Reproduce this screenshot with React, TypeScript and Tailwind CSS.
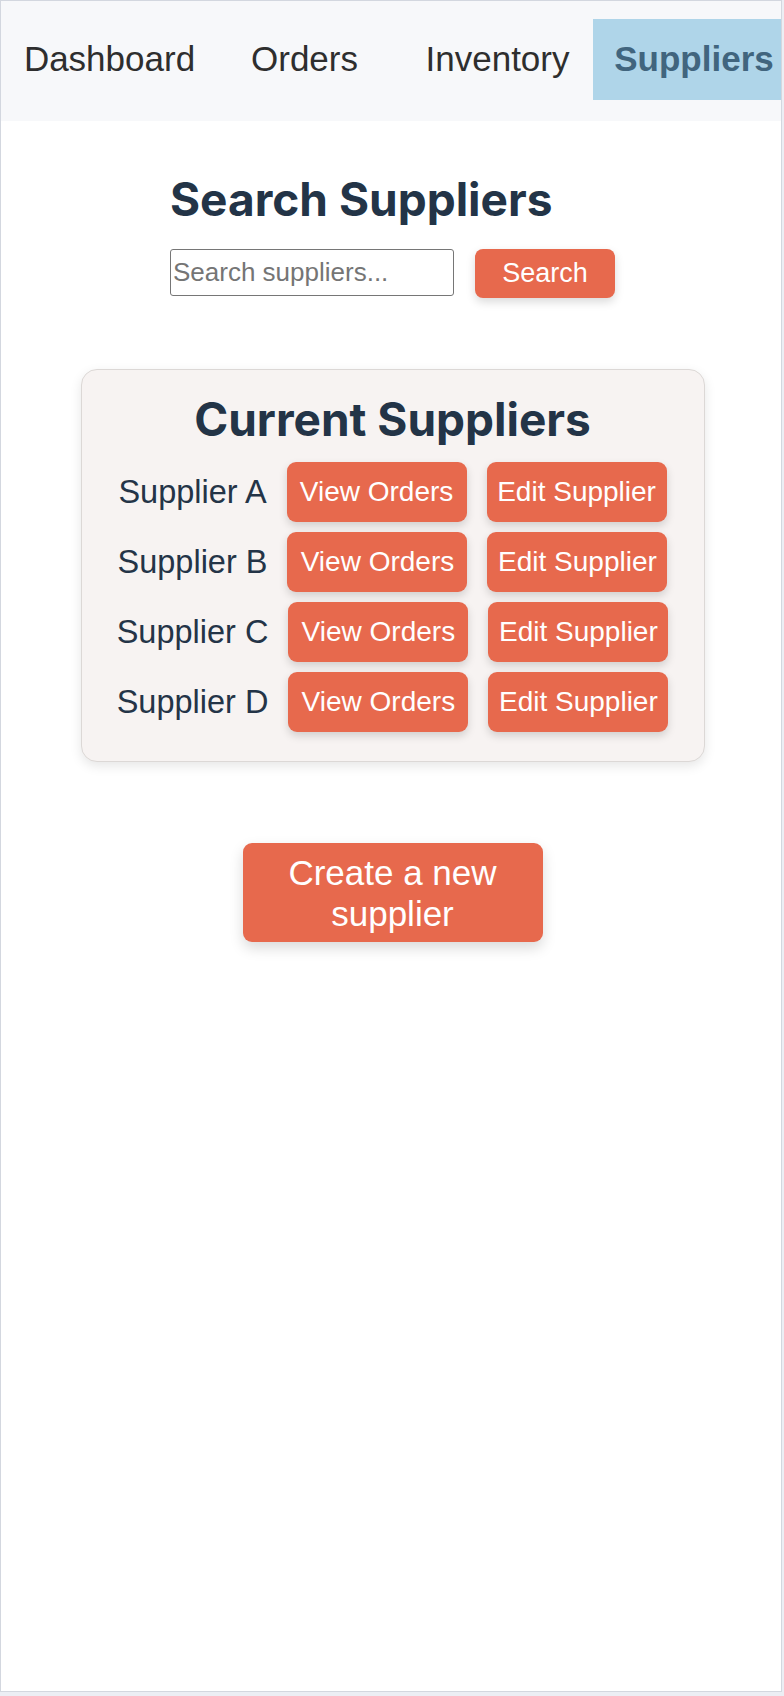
import React from "react";

const suppliers = ["Supplier A", "Supplier B", "Supplier C", "Supplier D"];

const App = () => {
  return (
    <div className="min-h-screen bg-[#eceef4] font-['Liberation_Sans',Arial,sans-serif]">
      <div className="w-[782px] h-[1692px] border border-[#d3d7df] bg-white overflow-hidden">
        {/* top nav */}
        <nav className="h-[120px] pb-[4px] pl-[11px] bg-[#f7f8fa] flex items-center overflow-hidden">
          <a className="w-[195px] shrink-0 text-center text-[35px] text-[#2e2e2e]">Dashboard</a>
          <a className="w-[195px] shrink-0 text-center text-[35px] text-[#2e2e2e]">Orders</a>
          <a className="w-[191px] shrink-0 text-center text-[35px] text-[#2e2e2e]">Inventory</a>
          <a className="w-[202px] h-[81px] shrink-0 bg-[#afd5e9] flex items-center justify-center text-[35px] font-bold text-[#41657e]">
            Suppliers
          </a>
        </nav>

        <main className="pl-[3px] flex flex-col items-center">
          {/* search */}
          <div className="mt-[55px] w-fit">
            <h2 className="font-['Inter',sans-serif] font-bold text-[46px] leading-none text-[#233447]">
              Search Suppliers
            </h2>
            <div className="mt-[27px] flex items-start gap-[21px]">
              <input
                type="text"
                placeholder="Search suppliers..."
                className="w-[284px] h-[47px] border border-[#767676] rounded-[3px] px-[2px] text-[26px] text-[#333] placeholder:text-[#757575] outline-none"
              />
              <button className="w-[140px] h-[49px] rounded-[8px] bg-[#e7694d] text-white text-[27px] shadow-[0_4px_10px_rgba(0,0,0,0.15)]">
                Search
              </button>
            </div>
          </div>

          {/* current suppliers card */}
          <div className="mt-[71px] w-[624px] h-[393px] rounded-[16px] border border-[#dcd8d6] bg-[#f7f3f2] shadow-[0_4px_12px_rgba(0,0,0,0.1)] flex flex-col items-center">
            <h2 className="mt-[26px] font-['Inter',sans-serif] font-bold text-[46px] leading-none text-[#233447]">
              Current Suppliers
            </h2>
            <div className="mt-[20px] flex flex-col gap-[10px]">
              {suppliers.map((name) => (
                <div key={name} className="flex items-center justify-center gap-[20px]">
                  <span className="text-[32.5px] text-[#243447]">{name}</span>
                  <button className="w-[180px] h-[60px] rounded-[9px] bg-[#e7694d] text-white text-[28px] shadow-[0_4px_8px_rgba(0,0,0,0.15)]">
                    View Orders
                  </button>
                  <button className="w-[180px] h-[60px] rounded-[9px] bg-[#e7694d] text-white text-[28px] shadow-[0_4px_8px_rgba(0,0,0,0.15)]">
                    Edit Supplier
                  </button>
                </div>
              ))}
            </div>
          </div>

          {/* create */}
          <button className="mt-[81px] w-[300px] h-[99px] rounded-[9px] bg-[#e7694d] text-white text-[35px] leading-[41px] px-[40px] shadow-[0_6px_14px_rgba(0,0,0,0.15)]">
            Create a new supplier
          </button>
        </main>
      </div>
    </div>
  );
};

export default App;
